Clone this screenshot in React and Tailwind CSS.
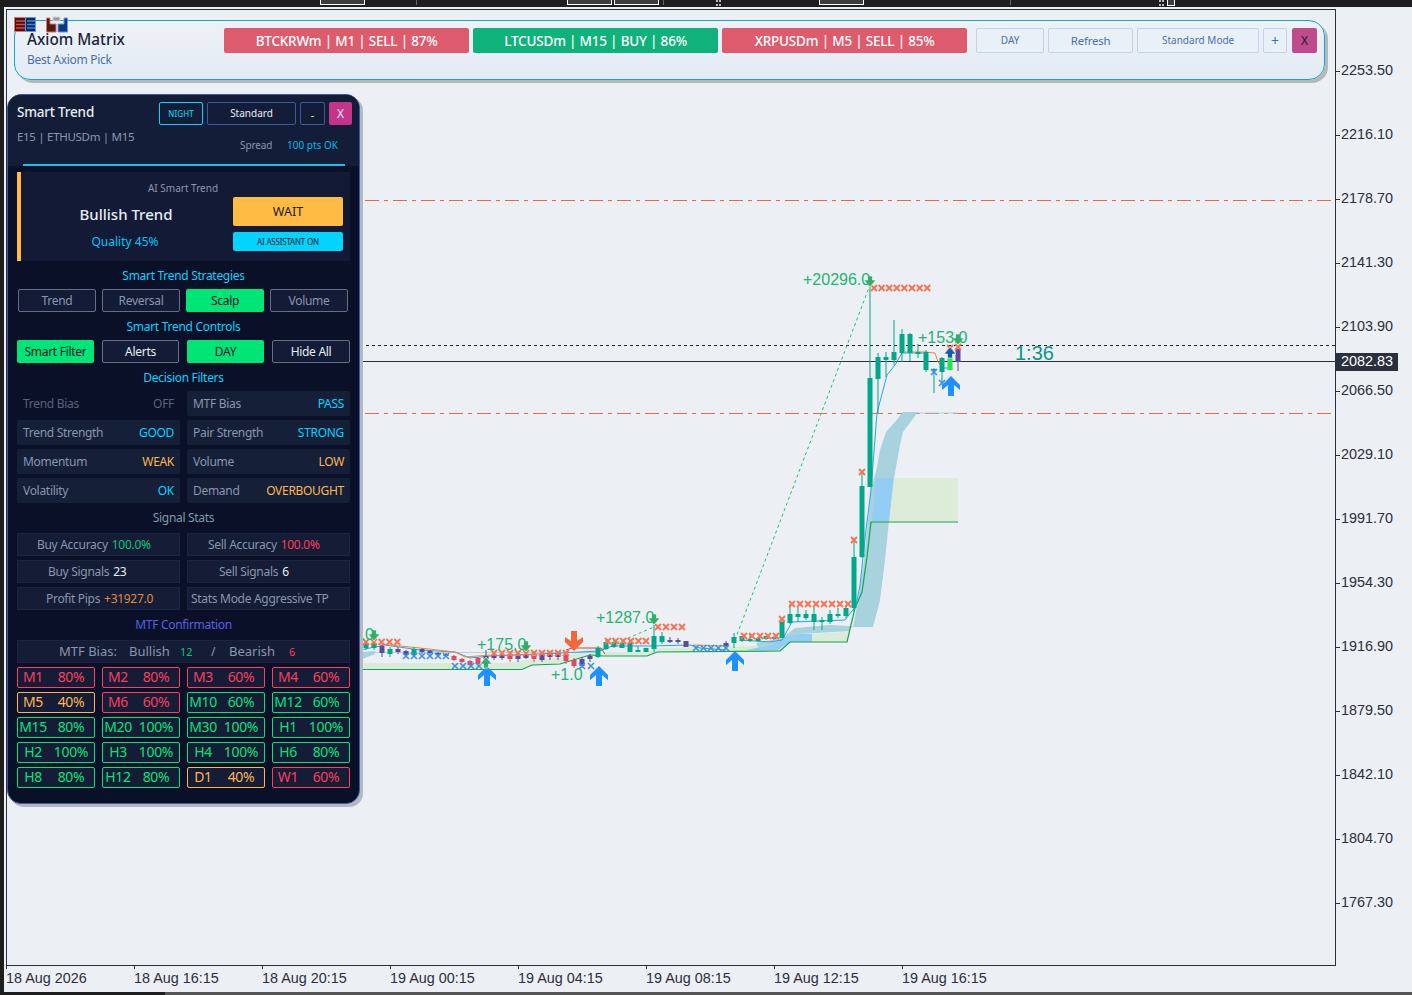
import React from "react";

const F = { fontFamily: '"Noto Sans", sans-serif' };

// [x, wickTop, wickBottom, bodyTop, bodyBottom, colour]
const T = "#00a887", P = "#5b4b9e", R = "#e04868";
const candles = [
  [366,642,650,643,648,T],[374,641,650,643,648,T],[382,645,657,646,653,P],[390,647,657,649,654,T],[398,647,654,649,652,P],
  [406,650,656,651,655,P],[414,647,656,649,655,T],[422,648,654,649,652,P],[430,650,655,651,653,P],[438,652,656,653,655,P],
  [446,653,657,654,656,P],[454,655,661,656,660,R],[462,658,663,659,662,R],[470,660,666,661,665,R],[478,657,665,658,664,R],
  [486,650,662,656,659,P],[494,652,660,656,658,P],[502,652,660,656,658,P],[510,654,662,656,659,R],[518,652,662,656,659,P],
  [526,652,659,655,658,P],[534,654,662,656,659,R],[542,652,662,655,660,P],[550,651,660,653,657,P],[558,651,660,653,657,P],
  [566,653,664,655,661,R],[574,658,668,660,666,R],[582,657,668,659,666,P],[590,654,662,656,659,P],
  [598,646,658,648,657,T],[606,640,650,642,649,T],[614,640,648,642,647,T],[622,642,648,643,648,T],[630,640,652,643,652,T],
  [638,646,652,650,652,T],[646,648,652,648,652,T],[654,622,652,636,649,T],[662,632,644,636,642,T],[670,637,643,640,642,P],
  [678,638,644,640,642,P],[686,641,647,641,647,P],[726,641,647,643,646,P],[734,633,648,637,643,T],[742,636,642,636,641,T],
  [750,634,642,639,641,T],[758,637,642,638,641,T],[766,636,640,636,639,T],[774,636,640,637,639,T],[782,618,638,622,638,T],
  [790,604,624,614,623,T],[798,607,622,614,617,T],[806,610,620,614,618,T],[814,607,630,614,622,T],[822,617,630,620,621,T],
  [830,610,624,614,622,T],[838,608,618,614,615,T],[846,605,618,608,616,T],[854,540,612,557,608,T],[862,472,558,486,557,T],
  [870,283,487,378,487,T],[878,353,413,357,379,T],[886,352,377,357,360,T],[894,320,365,352,360,T],[902,329,362,334,353,T],
  [910,333,361,334,353,T],[918,344,358,352,354,T],[926,350,372,352,370,T],[934,368,393,369,371,T],[942,357,385,358,372,T],
  [950,357,370,358,370,"#22e84a"],[958,349,371,349,362,P],
];

const row = (x0, n, y, step = 8) => Array.from({ length: n }, (_, i) => [x0 + i * step, y]);
const orangeX = [
  ...row(874, 8, 288, 7.6), ...row(792, 8, 604), ...row(744, 5, 636), ...row(658, 4, 627), ...row(608, 6, 641, 7.6),
  ...row(366, 5, 642, 7.8), ...row(494, 10, 653), [862, 472], [854, 540], [782, 619], [958, 347], [950, 348],
];
const blueX = [
  ...row(406, 6, 656), ...row(455, 4, 666), ...row(582, 2, 666, 9), ...row(696, 5, 648, 7.5), [934, 372], [942, 383],
];
const prices = ["2253.50","2216.10","2178.70","2141.30","2103.90","2066.50","2029.10","1991.70","1954.30","1916.90","1879.50","1842.10","1804.70","1767.30"];
const times = ["18 Aug 2026","18 Aug 16:15","18 Aug 20:15","19 Aug 00:15","19 Aug 04:15","19 Aug 08:15","19 Aug 12:15","19 Aug 16:15"];

const Up = ({ x, y, c = "#1e90ff" }) => <path transform={`translate(${x} ${y})`} d="M0 -10L9 -1V4L3 -1V10H-3V-1L-9 4V-1Z" fill={c} />;
const Down = ({ x, y }) => <path transform={`translate(${x} ${y})`} d="M-3 -10H3V0L9 -4V1L0 10L-9 1V-4L-3 0Z" fill="#f4673a" />;
const Small = ({ x, y }) => <path transform={`translate(${x} ${y})`} d="M-2.5 -6H2.5V-2H6L0 5L-6 -2H-2.5Z" fill="#36ad66" stroke="#ffffff" strokeWidth="0.6" />;
const SmallUp = ({ x, y, c }) => <path transform={`translate(${x} ${y})`} d="M2.5 6H-2.5V2H-6L0 -5L6 2H2.5Z" fill={c} stroke="#ffffff" strokeWidth="0.6" />;

function Chart() {
  const lbl = "#22b573";
  return (
    <svg className="absolute left-[-1px] top-[-1px]" width="1330" height="957" viewBox="6 9 1330 957">
      <line x1="365" x2="1335" y1="200.5" y2="200.5" stroke="#ea6a3c" strokeDasharray="14 5 4 5" />
      <line x1="365" x2="1335" y1="413.5" y2="413.5" stroke="#e2704a" strokeDasharray="14 5 4 5" />
      <line x1="360" x2="1335" y1="345.5" y2="345.5" stroke="#222" strokeDasharray="3 3" />
      <line x1="360" x2="1335" y1="361.5" y2="361.5" stroke="#2a303c" />

      <path d="M360 663H505L525 660L560 658L590 648L600 652L647 652L657 648L780 645L790 635L847 632L853 615L847 642H790L780 651L657 652L647 656H603L590 655L560 664L532 665L522 669H360Z" fill="#d9ecd9" />
      <rect x="870" y="478" width="88" height="43.5" fill="#dcecd8" />
      <path d="M853 627L858 600L864 560L868 520L871 490L877 467L880 450L886 432L895 422L903 412H918L903 432L900 445L894 478L889 521L885 560L880 600L873 627Z" fill="#a8d3de" />
      <path d="M876 478H893L889 521H872Z" fill="#93cdf5" />
      <path d="M360 652L375 651V654L360 660Z" fill="#a8d3de" />
      <path d="M756 643L782 638L795 628L830 625L850 626V631L800 634L786 645L760 650Z" fill="#a8d3de" />
      <path d="M746 650L772 645L786 637L800 634H812V642H790L778 650Z" fill="#93cdf5" />
      <path d="M375 652.5H600M918 413H958M838 627H853" stroke="#aed6e0" strokeWidth="1" fill="none" />

      <path d="M360 669.5H522L532 665L560 664L590 655L603 656H647L657 652L780 651L790 642H847L855 608L862 592L867 557L871 522H958" fill="none" stroke="#16a34a" strokeWidth="1.2" />
      <path d="M360 650L385 645L420 650L455 652L470 658L490 656L560 653L600 651L612 646L650 646L690 645L700 648L726 650M740 640L770 642L782 640L792 622L845 620L856 606L860 585L866 530L871 490L877 413L887 375L895 365L902 353H925M942 368H950" fill="none" stroke="#2e9fee" strokeWidth="1" />
      <path d="M902 352H925L935 353L938 362L942 367M380 644L420 648L455 652L465 657L490 655M694 645L726 646" fill="none" stroke="#ec8a30" strokeWidth="1" />
      <path d="M566 650L572 648H601L605 654" fill="none" stroke="#e23b3b" strokeWidth="1" />
      <path d="M735 640L870 285M600 650L654 627" fill="none" stroke="#22c55e" strokeWidth="1" strokeDasharray="3 3" />

      {candles.map(([x, a, b, c, d, col], i) => (
        <g key={i} fill={col}>
          <rect x={x - 0.5} y={a} width="1" height={b - a} />
          <rect x={x - 2.5} y={c} width="5" height={Math.max(d - c, 2)} />
        </g>
      ))}
      {orangeX.map(([x, y], i) => (
        <path key={i} transform={`translate(${x} ${y})`} d="M-3 -3L3 3M-3 3L3 -3" stroke="#f9714f" strokeWidth="1.8" fill="none" />
      ))}
      {blueX.map(([x, y], i) => (
        <path key={i} transform={`translate(${x} ${y})`} d="M-3 -3L3 3M-3 3L3 -3" stroke="#3d8fe8" strokeWidth="1.6" fill="none" />
      ))}

      <Up x={487} y={676} /><Up x={599} y={676} /><Up x={735} y={661} /><Up x={951} y={386} />
      <Down x={574} y={641} />
      <Small x={870} y={282} /><Small x={958} y={340} /><Small x={374} y={636} /><Small x={526} y={647} /><Small x={654} y={620} />
      <SmallUp x={486} y={662} c="#36ad66" /><SmallUp x={950} y={352} c="#0a5fb0" />

      <g style={{ fontFamily: '"Liberation Sans", sans-serif' }} fontSize="16" fill={lbl}>
        <text x="803" y="285">+20296.0</text>
        <text x="918" y="343">+153.0</text>
        <text x="477" y="650">+175.0</text>
        <text x="596" y="623">+1287.0</text>
        <text x="551" y="680">+1.0</text>
        <text x="374" y="640" textAnchor="end">+62.0</text>
        <text x="1015" y="360" fontSize="20" fill="#0d9488">1:36</text>
      </g>
    </svg>
  );
}

const Chip = ({ c, children, w }) => (
  <div className={`h-[25px] rounded-[2px] flex items-center justify-center pt-[1px] text-white text-[13.5px] tracking-[-0.2px] font-medium ${c} ${w}`}>{children}</div>
);
const LBtn = ({ w, cls = "text-[10px]", children }) => (
  <div className={`h-[25px] rounded-[2px] border border-[#c5d3e4] bg-[#e9f1f8] text-[#4a6fa8] flex items-center justify-center ${w} ${cls}`}>{children}</div>
);

function TopBar() {
  return (
    <div style={F} className="absolute left-[14px] top-[20px] w-[1311px] h-[60px] rounded-[16px] border border-[#12a5dc] bg-gradient-to-b from-[#eef2f7] to-[#e3ebf5] shadow-[3px_3px_0_#b8b8b8] flex pt-[7px] pl-[12px] pr-[7px]">
      <div className="w-[198px] flex flex-col">
        <div className="text-[15.3px] font-medium text-[#1b2438] leading-[22px]">Axiom Matrix</div>
        <div className="text-[12px] tracking-[-0.3px] text-[#4a6fa8] leading-[18px] mt-[1px]">Best Axiom Pick</div>
      </div>
      <div className="flex gap-[4px]">
        <Chip c="bg-[#de5b6e]" w="w-[245px]">BTCKRWm | M1 | SELL | 87%</Chip>
        <Chip c="bg-[#10b27c]" w="w-[245px]">LTCUSDm | M15 | BUY | 86%</Chip>
        <Chip c="bg-[#de5b6e]" w="w-[245px]">XRPUSDm | M5 | SELL | 85%</Chip>
      </div>
      <div className="flex gap-[4px] ml-[9px]">
        <LBtn w="w-[68px]">DAY</LBtn>
        <LBtn w="w-[85px]" cls="text-[11.5px] tracking-[-0.2px]">Refresh</LBtn>
        <LBtn w="w-[122px]">Standard Mode</LBtn>
        <LBtn w="w-[24px]" cls="text-[14px] text-[#1b2438]">+</LBtn>
      </div>
      <div className="ml-[5px] w-[25px] h-[25px] rounded-[2px] bg-[#bf4a8c] text-[#2a1630] text-[12px] flex items-center justify-center">X</div>
    </div>
  );
}

const Label = ({ h, c = "text-[#00d4ff]", children }) => (
  <div className={`flex items-center justify-center text-[12px] tracking-[-0.3px] ${h} ${c}`}>{children}</div>
);

const Btn = ({ on, w, c = "text-[#8a96ad]", children }) => (
  <div className={`h-[23px] rounded-[2px] flex items-center justify-center text-[12px] tracking-[-0.3px] ${w} ${on ? "bg-[#00e676] text-[#0a1028]" : `bg-[#131b36] border border-[#646e84] ${c}`}`}>{children}</div>
);

const Filter = ({ l, v, c, off }) => (
  <div className={`h-[25px] rounded-[2px] flex items-center justify-between px-[6px] text-[12px] tracking-[-0.3px] ${off ? "text-[#5a6478]" : "bg-[#151f38] text-[#8a96ad]"}`}>
    <span>{l}</span>
    <span className={c}>{v}</span>
  </div>
);

const Stat = ({ pl, children }) => (
  <div className={`h-[23px] bg-[#141c36] border border-[#1b2540] flex items-center gap-[4px] text-[12px] tracking-[-0.3px] text-[#8a96ad] ${pl}`}>{children}</div>
);

const G = "border-[#00e676] text-[#00e676]", Rd = "border-[#ff3d5c] text-[#ff3d5c]", Y = "border-[#ffb74d] text-[#ffb74d]";
const mtf = [
  ["M1","80%",Rd],["M2","80%",Rd],["M3","60%",Rd],["M4","60%",Rd],
  ["M5","40%",Y],["M6","60%",Rd],["M10","60%",G],["M12","60%",G],
  ["M15","80%",G],["M20","100%",G],["M30","100%",G],["H1","100%",G],
  ["H2","100%",G],["H3","100%",G],["H4","100%",G],["H6","80%",G],
  ["H8","80%",G],["H12","80%",G],["D1","40%",Y],["W1","60%",Rd],
];

function Panel() {
  return (
    <div style={F} className="absolute left-[7px] top-[94px] w-[353px] h-[710px] rounded-[14px] border border-[#3b5aa0] bg-[#0a1028] shadow-[3px_3px_0_#b4b8c4] overflow-hidden flex flex-col">
      <div className="h-[71px] bg-[#141d38] pl-[9px] pr-[7px] pt-[7px] flex flex-col">
        <div className="flex items-center h-[23px]">
          <div className="text-[13.5px] tracking-[-0.2px] font-medium text-[#e8edf5] w-[142px] -mt-[2px]">Smart Trend</div>
          <div className="w-[44px] h-[23px] rounded-[2px] border border-[#00d4ff] text-[#00e0ff] text-[8px] tracking-[0.1px] flex items-center justify-center">NIGHT</div>
          <div className="ml-[4px] w-[89px] h-[23px] rounded-[2px] border border-[#3b5aa0] text-[#e8edf5] text-[10px] flex items-center justify-center">Standard</div>
          <div className="ml-[4px] w-[25px] h-[23px] rounded-[2px] border border-[#3b5aa0] text-[#e8edf5] text-[11px] pt-[3px] flex items-center justify-center">-</div>
          <div className="ml-[4px] w-[23px] h-[23px] rounded-[2px] bg-[#c4358a] text-[#f3e6f0] text-[12px] flex items-center justify-center">X</div>
        </div>
        <div className="flex mt-[2px]">
          <div className="text-[11.5px] tracking-[-0.3px] text-[#8a96ad] w-[223px] leading-[18px] pt-[1px]">E15 | ETHUSDm | M15</div>
          <div className="text-[10px] tracking-[-0.1px] text-[#8a96ad] w-[47px] pt-[9px] leading-[18px]">Spread</div>
          <div className="text-[10px] text-[#00b8e6] pt-[9px] leading-[18px]">100 pts OK</div>
        </div>
        <div className="mt-auto mx-[6px] w-[322px] h-[2px] bg-[#1ec0e8]" />
      </div>

      <div className="flex-1 px-[9px] pt-[6px] flex flex-col">
        <div className="h-[89px] bg-[#131a35] border-l-[4px] border-[#ffbb44] flex flex-col">
          <div className="h-[25px] pt-[7px] pr-[5px] text-center text-[10px] text-[#8a96ad] leading-[18px]">AI Smart Trend</div>
          <div className="flex">
            <div className="w-[212px] flex flex-col items-center pr-[2px]">
              <div className="text-[15px] font-medium text-[#e8edf5] h-[34px] flex items-center">Bullish Trend</div>
              <div className="text-[12px] text-[#00c8f5] h-[20px] pt-[2px] pr-[2px] flex items-center">Quality 45%</div>
            </div>
            <div className="w-[110px] flex flex-col gap-[6px]">
              <div className="h-[29px] rounded-[2px] bg-[#ffbb44] text-[#1a1a22] text-[12.5px] pt-[1px] flex items-center justify-center">WAIT</div>
              <div className="h-[19px] rounded-[2px] bg-[#00d4ff] text-[#0a1028] text-[8px] tracking-[-0.2px] flex items-center justify-center">AI ASSISTANT ON</div>
            </div>
          </div>
        </div>

        <Label h="h-[28px] pt-[2px]">Smart Trend Strategies</Label>
        <div className="flex gap-[6px] px-[1px]">
          <Btn w="w-[78px]">Trend</Btn>
          <Btn w="w-[78px]">Reversal</Btn>
          <Btn w="w-[78px]" on>Scalp</Btn>
          <Btn w="w-[78px]">Volume</Btn>
        </div>
        <Label h="h-[28px] pt-[2px]">Smart Trend Controls</Label>
        <div className="flex gap-[8px]">
          <Btn w="w-[77px]" on>Smart Filter</Btn>
          <Btn w="w-[77px]" c="text-[#e8edf5]">Alerts</Btn>
          <Btn w="w-[77px]" on>DAY</Btn>
          <Btn w="w-[78px]" c="text-[#e8edf5]">Hide All</Btn>
        </div>
        <Label h="h-[28px] pt-[2px]">Decision Filters</Label>
        <div className="grid grid-cols-[163px_163px] gap-x-[7px] gap-y-[4px]">
          <Filter off l="Trend Bias" v="OFF" />
          <Filter l="MTF Bias" v="PASS" c="text-[#00d4ff]" />
          <Filter l="Trend Strength" v="GOOD" c="text-[#00d4ff]" />
          <Filter l="Pair Strength" v="STRONG" c="text-[#00d4ff]" />
          <Filter l="Momentum" v="WEAK" c="text-[#ffb74d]" />
          <Filter l="Volume" v="LOW" c="text-[#ffb74d]" />
          <Filter l="Volatility" v="OK" c="text-[#00d4ff]" />
          <Filter l="Demand" v="OVERBOUGHT" c="text-[#ffb74d]" />
        </div>
        <Label h="h-[30px]" c="text-[#7f9aa8]">Signal Stats</Label>
        <div className="grid grid-cols-[163px_163px] gap-x-[7px] gap-y-[4px]">
          <Stat pl="pl-[19px]">Buy Accuracy <span className="text-[#00c878]">100.0%</span></Stat>
          <Stat pl="pl-[20px]">Sell Accuracy <span className="text-[#ff3d5c]">100.0%</span></Stat>
          <Stat pl="pl-[30px]">Buy Signals <span className="text-[#e8edf5]">23</span></Stat>
          <Stat pl="pl-[31px]">Sell Signals <span className="text-[#e8edf5]">6</span></Stat>
          <Stat pl="pl-[28px]">Profit Pips <span className="text-[#e08a3c]">+31927.0</span></Stat>
          <Stat pl="pl-[3px]">Stats Mode Aggressive TP</Stat>
        </div>
        <Label h="h-[30px]" c="text-[#5a60e0]">MTF Confirmation</Label>
        <div className="h-[23px] bg-[#141c36] border border-[#1b2540] flex items-center text-[13px] text-[#8a96ad] pl-[41px] pt-[1px]">
          <span className="w-[70px]">MTF Bias:</span>
          <span className="w-[51px]">Bullish</span>
          <span className="w-[31px] text-[11px] text-[#00c878]">12</span>
          <span className="w-[18px] text-[12px]">/</span>
          <span className="w-[60px]">Bearish</span>
          <span className="text-[11px] text-[#ff3d5c]">6</span>
        </div>
        <div className="grid grid-cols-[78px_78px_78px_78px] gap-x-[7px] gap-y-[4px] mt-[4px]">
          {mtf.map(([a, b, c]) => (
            <div key={a} className={`h-[21px] rounded-[2px] border bg-[#141c36] grid grid-cols-[30px_1fr] items-center pb-[1px] text-[14px] leading-[18px] tracking-[-0.35px] ${c}`}>
              <span className="text-center">{a}</span>
              <span className="text-center">{b}</span>
            </div>
          ))}
        </div>
      </div>
    </div>
  );
}

const Tab = ({ ml }) => <div className={`w-[45px] h-[5px] bg-[#3c3c3c] border-x border-b border-white ${ml}`} />;
const Sep = ({ ml }) => <div className={`w-px h-[5px] bg-[#666] ${ml}`} />;
const Grip = ({ ml }) => (
  <div className={`w-[5px] h-[7px] grid grid-cols-2 gap-[1px] ${ml}`}>
    <i className="bg-[#bbb] h-[2px] w-[2px]" /><i className="bg-[#bbb] h-[2px] w-[2px]" />
    <i className="bg-[#bbb] h-[2px] w-[2px]" /><i className="bg-[#bbb] h-[2px] w-[2px]" />
  </div>
);

export default function App() {
  return (
    <div className="relative w-[1412px] h-[995px] bg-[#eceff4] overflow-hidden flex flex-col" style={{ fontFamily: '"Liberation Sans", sans-serif' }}>
      <div className="h-[7px] bg-[#1e1e1e] flex items-start shrink-0">
        <Tab ml="ml-[320px]" /><Sep ml="ml-[51px]" /><Tab ml="ml-[150px]" /><Tab ml="ml-[2px]" /><Sep ml="ml-[4px]" />
        <Grip ml="ml-[52px]" /><Tab ml="ml-[98px]" /><Sep ml="ml-[146px]" /><Grip ml="ml-[148px]" />
        <div className="ml-[3px] w-[8px] h-[6px] bg-[#3c3c3c] border-x border-b border-white" />
      </div>
      <div className="flex-1 flex min-h-0">
        <div className="w-[4px] bg-[#1e1e1e] shrink-0" />
        <div className="pl-[2px] pt-[2px] flex flex-col">
          <div className="flex">
            <div className="relative w-[1330px] h-[957px] border border-[#2a303c]">
              <Chart />
            </div>
            <div className="w-[76px] pt-[30px] flex flex-col text-[14.4px] text-[#2a303c]">
              {prices.map((p) => (
                <div key={p} className="h-[64px] flex items-center">
                  <div className="w-[4px] h-px bg-[#2a303c]" />
                  <span className="ml-[1px]">{p}</span>
                </div>
              ))}
            </div>
          </div>
          <div className="flex">
            {times.map((t) => (
              <div key={t} className="w-[128px] text-[14.4px] text-[#2a303c]">
                <div className="w-px h-[3px] bg-[#2a303c]" />
                <div className="leading-[20px] -mt-[1px] whitespace-nowrap">{t}</div>
              </div>
            ))}
          </div>
        </div>
      </div>
      <div className="h-[3px] bg-[#555] shrink-0 flex"><div className="w-[165px] bg-[#1e1e1e]" /></div>

      <TopBar />
      <Panel />

      <div className="absolute left-[1336px] top-[353px] w-[62px] h-[18px] bg-[#2a303c] text-white text-[14.4px] flex items-center pl-[5px]">2082.83</div>

      <svg className="absolute left-[13px] top-[16px]" width="58" height="18" viewBox="0 0 58 18">
        <rect x="1.5" y="1.5" width="11" height="14" fill="#3a1a1a" stroke="#f26a6a" />
        <rect x="12.5" y="1.5" width="10" height="14" fill="#12294f" stroke="#5a9cf5" />
        <path d="M3 5H12M3 8.5H12M3 12H12" stroke="#f03b3b" strokeWidth="1.5" />
        <path d="M14 5H22M14 8.5H22M14 12H22" stroke="#3b82f6" strokeWidth="1.5" />
        <path d="M33.5 2H37V8H43V16H33.5Z" fill="#4a1e14" stroke="#f26a6a" />
        <path d="M45 8H51V2H54.5V16H45Z" fill="#0f3a78" stroke="#5a9cf5" />
        <rect x="40" y="1" width="7" height="4" fill="#999" stroke="#d6d6d6" />
      </svg>
    </div>
  );
}
